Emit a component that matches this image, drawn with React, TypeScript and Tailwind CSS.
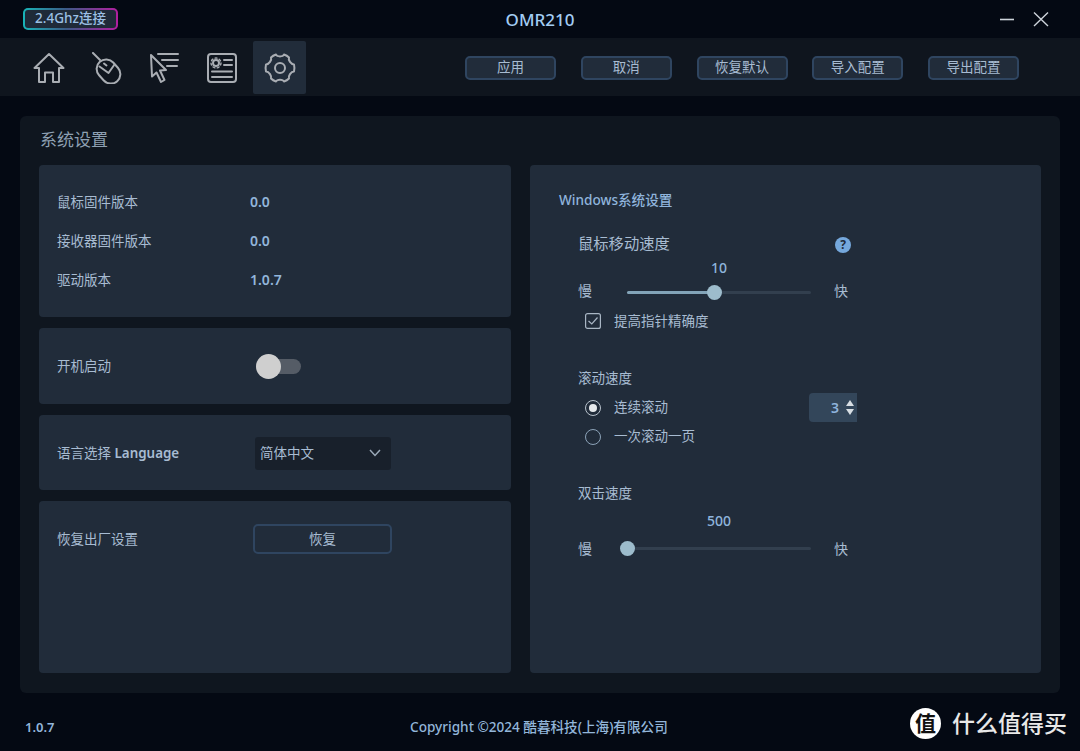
import React from "react";

const font = { fontFamily: '"Noto Sans","Noto Sans CJK SC",sans-serif' };

const S = "#a9adb3";

function HomeIcon() {
  return (
    <svg width="32" height="32" viewBox="0 0 32 32" fill="none" stroke={S} strokeWidth="2" strokeLinejoin="round" strokeLinecap="round">
      <path d="M1.5 16 L16 2 L30.5 16 H26 V30 H20 V20.5 H12 V30 H6 V16 Z" />
    </svg>
  );
}
function MouseIcon() {
  return (
    <svg width="32" height="32" viewBox="0 0 32 32" fill="none" stroke={S} strokeWidth="2" strokeLinejoin="round" strokeLinecap="round">
      <path d="M2 1 L9 8" />
      <rect x="8" y="6.5" width="19" height="26" rx="9.5" transform="rotate(-42 17.5 19.5)" />
      <path d="M8.5 14.5 L17.5 21 L23.5 12.5" />
      <path d="M13 11.5 L15.5 13.5" />
    </svg>
  );
}
function CursorIcon() {
  return (
    <svg width="32" height="32" viewBox="0 0 32 32" fill="none" stroke={S} strokeWidth="2" strokeLinejoin="round" strokeLinecap="round">
      <path d="M2 3 L17 18 L11 18.5 L15.5 28 L12 30 L7.5 20.5 L3 24.5 Z" />
      <path d="M9 2 H29 M13 8 H29 M18 14 H28" />
    </svg>
  );
}
function ConfigIcon() {
  return (
    <svg width="32" height="32" viewBox="0 0 32 32" fill="none" stroke={S} strokeWidth="2" strokeLinecap="round">
      <rect x="2" y="2" width="28" height="28" rx="3" />
      <circle cx="10" cy="11" r="3" />
      <circle cx="10" cy="11" r="5" strokeDasharray="2 2.4" strokeWidth="1.4" />
      <path d="M18 8 H26 M18 13 H26 M6 19.5 H26 M6 25 H26" />
    </svg>
  );
}
function GearIcon() {
  return (
    <svg width="32" height="32" viewBox="0 0 32 32" fill="none" stroke={S} strokeWidth="2" strokeLinejoin="round">
      <path d="M12 2.5 C13 5 19 5 20 2.5 C21.5 3 23.5 4 25 5.5 C24 8 27 12.5 30 12.5 C30.5 14.5 30.5 17.5 30 19.5 C27 19.5 24 24 25 26.5 C23.5 28 21.5 29 20 29.5 C19 27 13 27 12 29.5 C10.5 29 8.5 28 7 26.5 C8 24 5 19.5 2 19.5 C1.5 17.5 1.5 14.5 2 12.5 C5 12.5 8 8 7 5.5 C8.5 4 10.5 3 12 2.5 Z" />
      <circle cx="16" cy="16" r="5" />
    </svg>
  );
}

function TopButton({ children }: { children: React.ReactNode }) {
  return (
    <button className="h-[24px] w-[91px] rounded-[5px] border-2 border-[#2f4560] bg-[#212c3a] pt-[1px] text-[13.5px] leading-none text-[#a8bcd2]">
      {children}
    </button>
  );
}

function Slider({ value, percent, text, track, row }: { value: string; percent: number; text: string; track: string; row: string }) {
  return (
    <div className="mt-[3px]">
      <div className="ml-[49px] h-[20px] w-[184px] text-center text-[14px] font-medium leading-[20px] text-[#8fb4dc]">{value}</div>
      <div className={`flex h-[24px] items-center text-[14px] text-[#a8bcd2] ${row}`}>
        <span className={`w-[49px] ${text}`}>慢</span>
        <div className={`relative h-[3px] w-[184px] rounded-full bg-[#323f4e] ${track}`}>
          <div className="h-full rounded-full bg-[#83a4b8]" style={{ width: `${percent}%` }} />
          <div
            className="absolute top-[-6px] ml-[-7px] h-[15px] w-[15px] rounded-full bg-[#9dbccc]"
            style={{ left: `${percent}%` }}
          />
        </div>
        <span className={`ml-[23px] ${text}`}>快</span>
      </div>
    </div>
  );
}

export default function App() {
  return (
    <div className="flex h-[751px] w-[1080px] flex-col overflow-hidden bg-[#040913]" style={font}>
      <header className="relative flex h-[38px] shrink-0 items-center">
        <div className="ml-[23px] flex h-[22px] w-[95px] items-center justify-center rounded-[5px] bg-[linear-gradient(90deg,#18b5b8,#3b5a86_45%,#b21fa0)] p-[2px]">
          <div className="flex h-full w-full items-center justify-center rounded-[3px] bg-[#1f2a38] text-[13.5px] font-medium leading-none text-[#9cc0e4]">
            2.4Ghz连接
          </div>
        </div>
        <div className="absolute left-0 top-[8px] w-full text-center text-[17px] font-medium leading-[24px] text-[#a3cdf3]">
          OMR210
        </div>
        <div className="ml-auto mr-[31px] flex items-center gap-[18px]">
          <svg width="16" height="16" viewBox="0 0 16 16" stroke="#cdd3da" strokeWidth="1.6" fill="none"><path d="M1 8.5 H15" /></svg>
          <svg width="16" height="16" viewBox="0 0 16 16" stroke="#cdd3da" strokeWidth="1.4" fill="none"><path d="M1 1.5 L15 15 M15 1.5 L1 15" /></svg>
        </div>
      </header>

      <nav className="flex h-[58px] shrink-0 items-center bg-[#0f151e] pt-[1px]">
        <div className="ml-[20px] flex items-center">
          <div className="flex h-[53px] w-[58px] items-center justify-center"><HomeIcon /></div>
          <div className="flex h-[53px] w-[58px] items-center justify-center"><MouseIcon /></div>
          <div className="flex h-[53px] w-[58px] items-center justify-center"><CursorIcon /></div>
          <div className="flex h-[53px] w-[56px] items-center justify-center"><ConfigIcon /></div>
          <div className="ml-[3px] flex h-[53px] w-[53px] items-center justify-center rounded-[2px] bg-[#212c3a]"><GearIcon /></div>
        </div>
        <div className="ml-auto mr-[61px] flex gap-[24.75px]">
          <TopButton>应用</TopButton>
          <TopButton>取消</TopButton>
          <TopButton>恢复默认</TopButton>
          <TopButton>导入配置</TopButton>
          <TopButton>导出配置</TopButton>
        </div>
      </nav>

      <main className="mx-[20px] mt-[20px] flex h-[577px] shrink-0 flex-col rounded-[6px] bg-[#0f161f] px-[19px] pb-[20px]">
        <h1 className="h-[49px] pl-[1px] pt-[12px] text-[17px] font-normal leading-[24px] text-[#8ea0b2]">系统设置</h1>
        <div className="flex flex-1 gap-[19px]">
          <div className="flex w-[472px] flex-col gap-[11px]">
            <section className="h-[152px] rounded-[4px] bg-[#212c3a] px-[18px] pt-[18px] text-[13.5px] text-[#a8bcd2]">
              {[["鼠标固件版本", "0.0"], ["接收器固件版本", "0.0"], ["驱动版本", "1.0.7"]].map(([a, b]) => (
                <div key={a} className="flex h-[39px] items-center">
                  <span className="w-[193px]">{a}</span>
                  <span className="mb-[2px] text-[14px] font-semibold text-[#93b6da]">{b}</span>
                </div>
              ))}
            </section>
            <section className="flex h-[76px] items-center rounded-[4px] bg-[#212c3a] px-[18px] text-[13.5px] text-[#a8bcd2]">
              <span className="w-[199px]">开机启动</span>
              <div className="relative h-[15px] w-[45px] rounded-full bg-[#555c66]">
                <div className="absolute left-0 top-[-5px] h-[25px] w-[25px] rounded-full bg-[#cfcfcf]" />
              </div>
            </section>
            <section className="flex h-[75px] items-center rounded-[4px] bg-[#212c3a] px-[18px] pt-[1px] text-[13.5px] text-[#a8bcd2]">
              <span className="w-[198px]">语言选择 <span className="text-[13.4px] font-semibold">Language</span></span>
              <div className="flex h-[33px] w-[136px] items-center justify-between rounded-[3px] bg-[#18202b] pl-[5px] pr-[10px]">
                <span>简体中文</span>
                <svg width="12" height="8" viewBox="0 0 12 8" fill="none" stroke="#9aa8b8" strokeWidth="1.5"><path d="M1 1 L6 6.5 L11 1" /></svg>
              </div>
            </section>
            <section className="flex flex-1 items-start rounded-[4px] bg-[#212c3a] px-[18px] pt-[23px] text-[13.5px] text-[#a8bcd2]">
              <span className="w-[196px] leading-[30px]">恢复出厂设置</span>
              <button className="h-[30px] w-[139px] rounded-[5px] border-2 border-[#2f4560] pt-[1px] text-[13.5px] leading-none text-[#a8bcd2]">恢复</button>
            </section>
          </div>

          <section className="w-[511px] rounded-[4px] bg-[#212c3a] pl-[29px] pt-[25px] text-[14px] text-[#a8bcd2]">
            <h2 className="text-[13.6px] font-medium leading-[20px] text-[#8fb4dc]">Windows系统设置</h2>
            <div className="ml-[19px] mt-[23px] w-[270px]">
              <div className="flex h-[22px] items-center justify-between">
                <span className="text-[15.3px] leading-none">鼠标移动速度</span>
                <span className="mr-[-3px] mt-[1px] flex h-[16px] w-[16px] items-center justify-center rounded-full bg-[#75a8dc] text-[12px] font-bold leading-none text-[#212c3a]">?</span>
              </div>
              <Slider value="10" percent={47.5} text="mb-[3px]" track="" row="mt-[2px]" />
              <label className="ml-[7px] mt-[7px] flex h-[20px] items-center gap-[13px] text-[13.5px]">
                <svg width="16" height="16" viewBox="0 0 16 16" fill="none" stroke="#a9b6c4" strokeWidth="1.2">
                  <rect x="0.6" y="0.6" width="14.8" height="14.8" rx="2" />
                  <path d="M3.5 8 L6.8 11 L12.5 4.5" />
                </svg>
                提高指针精确度
              </label>
              <div className="mt-[37px] h-[20px] text-[13.5px] leading-[20px]">滚动速度</div>
              <div className="mt-[5px] flex h-[29px] items-center text-[13.5px]">
                <span className="ml-[7px] flex h-[16px] w-[16px] items-center justify-center rounded-full border-[1.5px] border-[#b8c2cc]">
                  <span className="h-[8px] w-[8px] rounded-full bg-[#e6e9ec]" />
                </span>
                <span className="ml-[13px]">连续滚动</span>
                <div className="ml-auto mr-[-9px] flex h-[29px] w-[48px] items-center justify-end gap-[7px] rounded-l-[4px] bg-[#33465a] pr-[3px]">
                  <span className="text-[14px] font-semibold leading-none text-[#8fb4dc]">3</span>
                  <span className="flex flex-col gap-[3px]">
                    <svg width="8" height="6" viewBox="0 0 8 6" fill="#d8dee4"><path d="M4 0 L8 6 H0 Z" /></svg>
                    <svg width="8" height="6" viewBox="0 0 8 6" fill="#d8dee4"><path d="M4 6 L8 0 H0 Z" /></svg>
                  </span>
                </div>
              </div>
              <div className="flex h-[29px] items-center text-[13.5px]">
                <span className="ml-[7px] h-[16px] w-[16px] rounded-full border-[1.5px] border-[#8ca3b8]" />
                <span className="ml-[13px]">一次滚动一页</span>
              </div>
              <div className="mt-[32px] h-[20px] text-[13.5px] leading-[20px]">双击速度</div>
              <div className="mt-[8px]"><Slider value="500" percent={0} text="" track="mt-[1px]" row="mt-[5px]" /></div>
            </div>
          </section>
        </div>
      </main>

      <footer className="relative flex h-[58px] shrink-0 items-start pl-[25px] pt-[24px] text-[13px] font-semibold leading-[20px] text-[#93b6da]">
        <span>1.0.7</span>
        <span className="absolute left-[410px] top-[24px] text-[13.6px] font-medium">Copyright ©2024 酷暮科技(上海)有限公司</span>
        <div className="absolute left-[910px] top-[15px] flex items-center gap-[11px]">
          <span className="flex h-[31px] w-[31px] items-center justify-center rounded-full bg-white text-[21px] font-bold leading-none text-[#111]">值</span>
          <span className="text-[23px] font-medium leading-[31px] text-[#e8e8e8]">什么值得买</span>
        </div>
      </footer>
    </div>
  );
}
